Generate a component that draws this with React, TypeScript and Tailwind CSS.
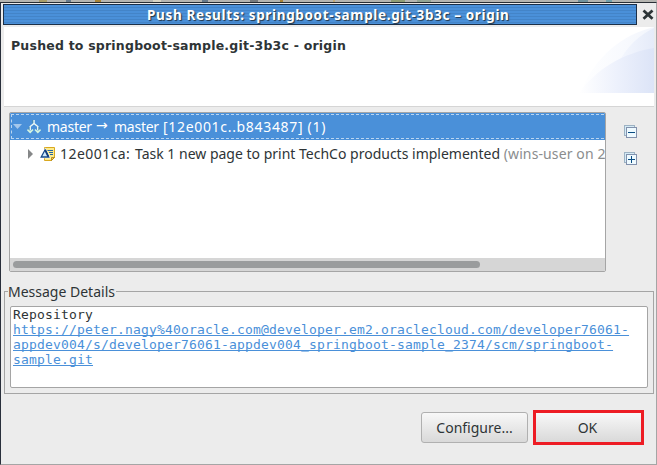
import React from 'react';

const ui = "font-['Noto_Sans','Open_Sans',sans-serif] whitespace-pre";

function CloseIcon() {
  return (
    <svg width="12" height="12" viewBox="0 0 12 12" className="block">
      <path d="M1.5 1.5 10.5 9.8M10.5 1.5 1.5 9.8" stroke="#2c3436" strokeWidth="2.8" />
    </svg>
  );
}

function BranchIcon() {
  return (
    <svg width="14" height="15" viewBox="0 0 14 15" className="block shrink-0" fill="none">
      <path d="M7 1v4M7 4.5 3.2 7.5v4M7 4.5l3.8 3v4" stroke="#eefaf4" strokeWidth="1.5" />
      <path d="M.5 10.5 3.2 13.3 6 10.5M8 10.5l2.8 2.8 2.7-2.8" stroke="#d4f5df" strokeWidth="1.6" />
      <path d="M5.7 1v3M2.1 8v3M11.9 8v3" stroke="#4a8a9c" strokeWidth=".7" />
    </svg>
  );
}

function CommitIcon() {
  return (
    <svg width="16" height="16" viewBox="0 0 16 16" className="block shrink-0" fill="none">
      <path d="M4.5 1.5h10v10l-3 3h-7z" fill="#fdeb8c" stroke="#d9a820" />
      <path d="M14.5 11.5h-3v3z" fill="#f5cf55" stroke="#a87e14" strokeWidth=".8" />
      <path d="M7.5 4.5h5.5M9 6.5h4M10 8.5h3" stroke="#2464a4" />
      <path d="M5.3 3.2 9.5 11.5H.7z" fill="#cde8fb" stroke="#fff" strokeWidth="1.5" />
      <path d="M5.1 3.8 1.2 11h7.6z" fill="#cde8fb" stroke="#164a8a" strokeWidth="1.3" />
      <path d="M5.2 4 8.3 10.7" stroke="#123d7c" strokeWidth="1.8" />
    </svg>
  );
}

function TreeToggle({ plus = false }: { plus?: boolean }) {
  return (
    <svg width="13" height="13" viewBox="0 0 13 13" className="block" shapeRendering="crispEdges">
      <rect x=".5" y=".5" width="10" height="10" fill="#d5ebf5" stroke="#9db2c4" />
      <rect x="2.5" y="2.5" width="10" height="10" fill="#eefaff" stroke="#8291ad" />
      <path d="M4 7.5h7" stroke="#094c83" />
      {plus && <path d="M7.5 4v7" stroke="#094c83" />}
    </svg>
  );
}

function BannerArt() {
  return (
    <svg width="76" height="66" viewBox="0 0 76 66" className="block">
      <defs>
        <linearGradient id="back" x1="0" x2="1">
          <stop offset="0" stopColor="#fff" />
          <stop offset=".6" stopColor="#f8fafe" />
          <stop offset="1" stopColor="#f2f5fc" />
        </linearGradient>
        <linearGradient id="mid" x1="0" x2="1">
          <stop offset="0" stopColor="#f4f7fe" />
          <stop offset="1" stopColor="#e5ebf9" />
        </linearGradient>
        <linearGradient id="front" x1="0" x2="1">
          <stop offset="0" stopColor="#fff" />
          <stop offset=".5" stopColor="#edf1fc" />
          <stop offset="1" stopColor="#dce4f7" />
        </linearGradient>
      </defs>
      <path d="M4 62C18 30 43 8 76 0V66H0Z" fill="url(#back)" />
      <path d="M41 35Q53 12 76 1V35Z" fill="url(#mid)" />
      <path d="M1 66C19 41 46 26 76 21V66Z" fill="url(#front)" />
    </svg>
  );
}

export default function App() {
  return (
    <div className="flex h-[465px] w-[657px] flex-col overflow-hidden bg-[#ececec] text-[#2e3436]">
      <div className="flex h-[2px] shrink-0 items-stretch bg-[#b5b5b1]">
        <div className="ml-[39px] w-[8px] bg-[#a79d68]" />
        <div className="ml-[19px] w-[5px] bg-[#697c8c]" />
        <div className="ml-[24px] w-[6px] bg-[#a98436]" />
        <div className="ml-[52px] w-[8px] bg-[#d8d4c4]" />
        <div className="ml-[41px] w-[6px] bg-[#677989]" />
        <div className="ml-[42px] w-[8px] bg-[#777a7c]" />
        <div className="ml-[22px] w-[3px] bg-[#a98436]" />
        <div className="ml-[50px] w-[2px] bg-[#c5a875]" />
        <div className="ml-[56px] w-[14px] bg-[#909d74]" />
        <div className="ml-[12px] w-[14px] bg-[#92a594]" />
        <div className="ml-[147px] w-[10px] bg-[#71929c]" />
        <div className="ml-[18px] w-[6px] bg-[#71a0aa]" />
      </div>
      <div className="flex h-[463px] flex-col border-b border-l border-r border-t border-b-[#a5a5a5] border-l-[#292f3b] border-r-[#a5a5a5] border-t-[#292f35]">
        <header className="flex h-[24px] shrink-0 pl-[2px] pt-px">
          <div className={`${ui} flex h-[21px] w-[634px] items-center border border-[#1c3048] bg-[repeating-linear-gradient(to_bottom,#4a90d9_0px,#4a90d9_2px,#4384c8_2px,#4384c8_3px)] pl-[143px] pt-[2px] text-white`}>
            <h1 className="text-[13.5px] font-bold leading-[19px] tracking-[0.65px] [text-shadow:1px_1px_1px_#234]">Push Results: springboot-sample.git-3b3c – origin</h1>
          </div>
          <button className="ml-[5px] mt-[5px] h-[12px] w-[12px]" aria-label="Close"><CloseIcon /></button>
        </header>
        <section className="ml-[3px] mr-[2px] flex h-[80px] shrink-0 justify-between border-b border-[#d5d5d5] bg-white">
          <h2 className="whitespace-pre pl-[7px] pt-[11px] font-['DejaVu_Sans',sans-serif] text-[12.5px] font-bold leading-[16px] tracking-[0.21px]">Pushed to springboot-sample.git-3b3c - origin</h2>
          <BannerArt />
        </section>
        <main className="flex h-[165px] shrink-0 pl-[8px] pt-[5px]">
          <div className="flex h-[160px] w-[597px] flex-col overflow-hidden rounded-[2px] border border-[#a5a5a5] bg-white">
            <div className={`${ui} flex h-[27px] w-[620px] shrink-0 items-center bg-[#4a90d9] text-[14px] text-white outline-1 -outline-offset-2 outline-dashed outline-[#b9d5f1]`}>
              <svg width="11" height="8" className="ml-[2px] shrink-0"><path d="M1 1h9L5.5 6z" fill="#a5c8ec" /></svg>
              <span className="ml-[4px]"><BranchIcon /></span>
              <span className="ml-[6px] flex w-[116px] tracking-[-0.25px]">
                <span className="w-[49px]">master</span>
                <span className="w-[18px] font-['DejaVu_Sans',sans-serif] leading-[19px]">→</span>
                <span>master</span>
              </span>
              <span className="tracking-[0.68px]">[12e001c..b843487] (1)</span>
            </div>
            <div className={`${ui} flex h-[27px] shrink-0 items-center text-[14px]`}>
              <svg width="7" height="12" className="ml-[17px] shrink-0"><path d="M1 1 6 6 1 11z" fill="#858788" /></svg>
              <span className="ml-[6px]"><CommitIcon /></span>
              <span className="ml-[4px] w-[75px] shrink-0 tracking-[0.45px]">12e001ca: </span>
              <span>Task 1 new page to print TechCo products implemented </span>
              <span className="tracking-[0.12px] text-[#8b8d8e]">(wins-user on 2</span>
            </div>
            <div className="grow" />
            <div className="h-[13px] shrink-0 bg-[#d6d6d6] px-[3px] pt-[3px]">
              <div className="h-[7px] w-[467px] rounded-full bg-[#9a9c9d]" />
            </div>
          </div>
          <div className="flex flex-col gap-[14px] pl-[18px] pt-[13px]">
            <TreeToggle />
            <TreeToggle plus />
          </div>
        </main>
        <fieldset className="ml-[3px] mr-[2px] mt-[10px] h-[112px] shrink-0 border border-[#a5a5a5] px-[5px]">
          <legend className={`${ui} -ml-[2px] h-[19px] w-[108px] text-[14px] leading-[19px]`}>Message Details</legend>
          <div className="mt-[5px] h-[82px] w-[638px] rounded-[2px] border border-[#a5a5a5] bg-white pl-[2px] font-['DejaVu_Sans_Mono',monospace] text-[13px] leading-[15px] tracking-[0.174px]">
            <p>Repository</p>
            <p className="whitespace-pre text-[#4a90d9] underline underline-offset-1 [text-decoration-skip-ink:none]">{'https://peter.nagy%40oracle.com@developer.em2.oraclecloud.com/developer76061-\nappdev004/s/developer76061-appdev004_springboot-sample_2374/scm/springboot-\nsample.git'}</p>
          </div>
        </fieldset>
        <footer className={`${ui} mt-[16px] flex h-[35px] items-center justify-end gap-[5px] pr-[12px] text-[14px]`}>
          <button className="h-[31px] w-[107px] rounded-[3px] border border-[#b0b0b0] bg-gradient-to-b from-[#f8f8f8] to-[#d9d9d9]">Configure...</button>
          <button className="h-[35px] w-[111px] border-[3px] border-[#ed1c24] bg-gradient-to-b from-[#f8f8f8] to-[#d9d9d9] pr-[2px]">OK</button>
        </footer>
      </div>
    </div>
  );
}
